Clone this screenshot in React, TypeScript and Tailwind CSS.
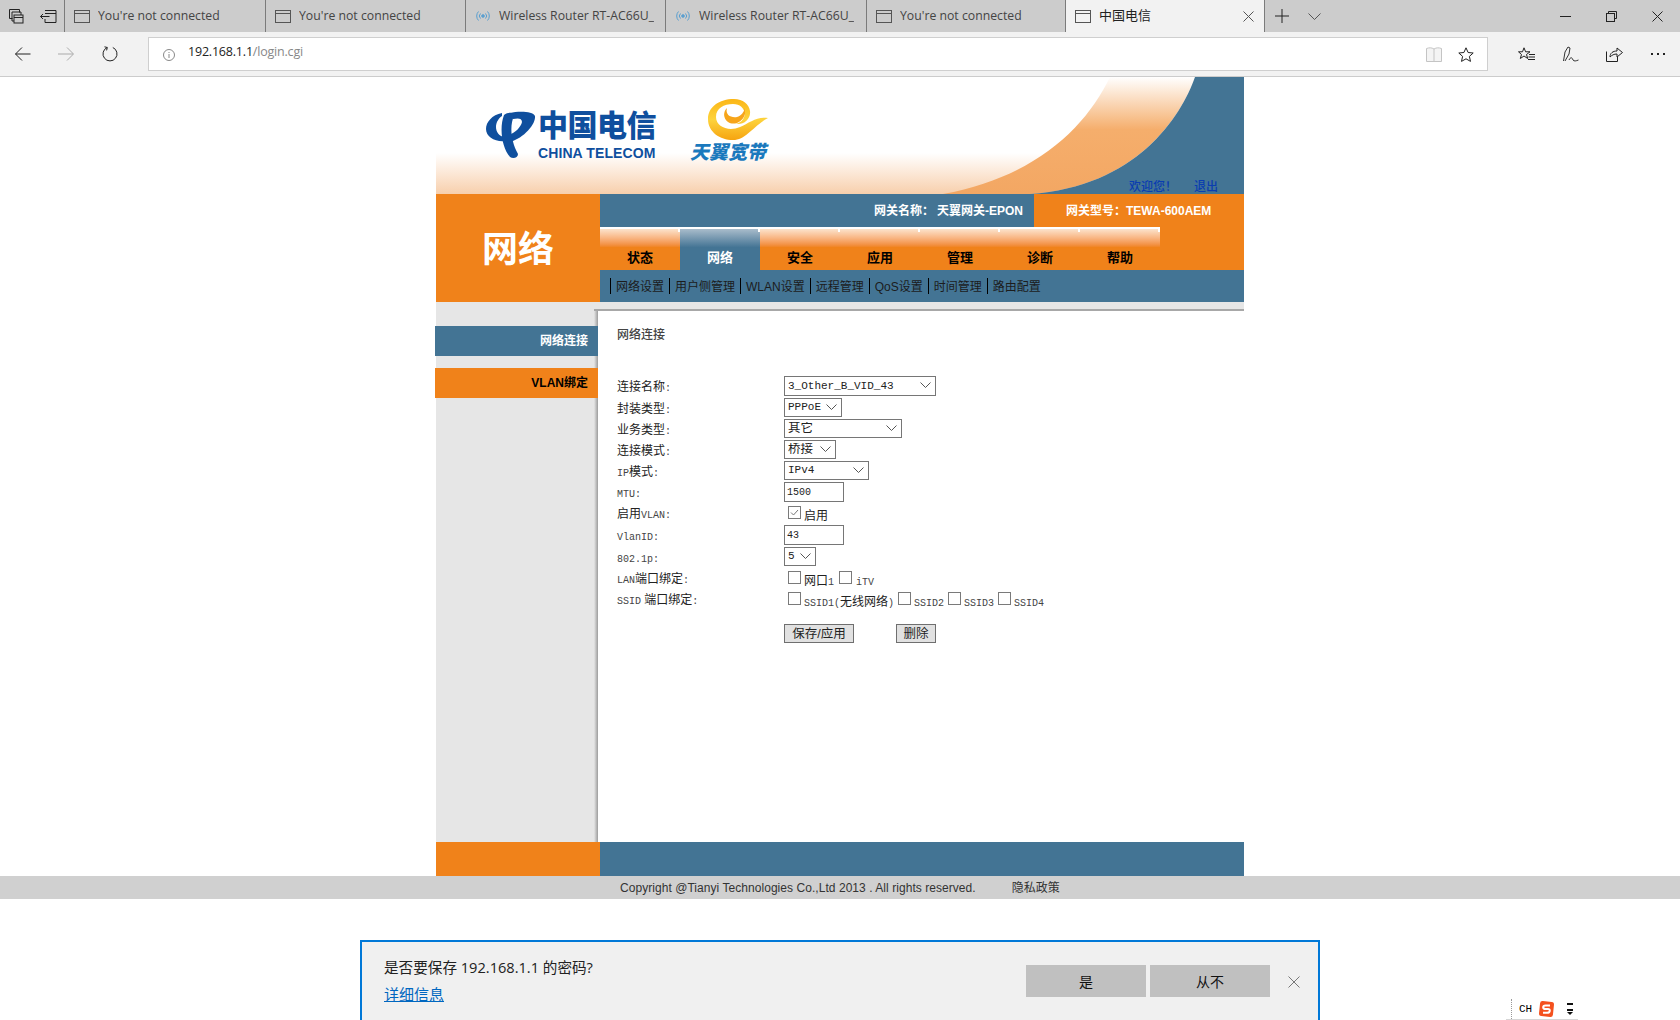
const mono = "font-['Liberation_Mono','Noto_Sans_CJK_SC',monospace]";

const tabs = [
    { title: "You're not connected", width: "w-[201px]", icon: "page" },
    { title: "You're not connected", width: "w-[200px]", icon: "page" },
    { title: "Wireless Router RT-AC66U_", width: "w-[200px]", icon: "wifi" },
    { title: "Wireless Router RT-AC66U_", width: "w-[201px]", icon: "wifi" },
    { title: "You're not connected", width: "w-[199px]", icon: "page" },
];

const PageIcon = () => (
    <svg width="16" height="13" viewBox="0 0 16 13" fill="none" stroke="#555" className="shrink-0">
        <rect x="0.5" y="0.5" width="15" height="12" />
        <path d="M0 3.5h16" />
    </svg>
);

const WifiIcon = () => (
    <svg width="16" height="14" viewBox="0 0 16 14" fill="none" stroke="#5a9fd0" className="shrink-0">
        <circle cx="8" cy="7" r="1.3" fill="#5a9fd0" />
        <path d="M5.5 4.5a3.5 3.5 0 0 0 0 5M10.5 4.5a3.5 3.5 0 0 1 0 5M3.5 2.5a6.5 6.5 0 0 0 0 9M12.5 2.5a6.5 6.5 0 0 1 0 9" />
    </svg>
);

const BrowserTabs = () => (
    <div className="flex h-8 bg-[#cccccc] text-[12.25px] text-[#444] font-['Open_Sans','Noto_Sans_CJK_SC',sans-serif]">
        <div className="flex w-16 items-center pl-[9px]">
            <svg width="15" height="15" viewBox="0 0 15 15" fill="none" stroke="#222">
                <path d="M0.5 0.5h10v3M0.5 0.5v9h3M3 3h9v3M3 3v9h2" />
                <rect x="5" y="6" width="9" height="8" fill="#cccccc" />
                <path d="M5 8.5h9" />
            </svg>
            <svg width="17" height="13" viewBox="0 0 17 13" fill="none" stroke="#222" className="ml-4">
                <path d="M5 0.5h11v12H5V9M5 3.5h11M0.5 6.5h9M3 4L0.5 6.5 3 9" />
            </svg>
        </div>
        {tabs.map((tab, index) => (
            <div key={index} className={`flex items-center border-l border-[#7b7b7b] pl-[9px] ${tab.width}`}>
                <span className="flex w-6 shrink-0">{tab.icon === "wifi" ? <WifiIcon /> : <PageIcon />}</span>
                <span className="truncate">{tab.title}</span>
            </div>
        ))}
        <div className="flex w-[200px] items-center border-x border-[#7b7b7b] bg-[#f2f2f2] pl-[9px] text-[13px] text-[#222]">
            <span className="flex w-6 shrink-0"><PageIcon /></span>
            <span>中国电信</span>
            <svg width="11" height="11" viewBox="0 0 11 11" stroke="#555" className="ml-auto mr-[10px]">
                <path d="M0.5 0.5l10 10M10.5 0.5l-10 10" />
            </svg>
        </div>
        <div className="flex flex-1 items-center">
            <svg width="14" height="14" viewBox="0 0 14 14" stroke="#222" className="ml-[10px]">
                <path d="M7 0v14M0 7h14" />
            </svg>
            <svg width="13" height="7" viewBox="0 0 13 7" fill="none" stroke="#555" className="ml-[19px]">
                <path d="M0.5 0.5L6.5 6.5 12.5 0.5" />
            </svg>
            <div className="ml-auto flex items-center">
                <svg width="11" height="11" viewBox="0 0 11 11" stroke="#222"><path d="M0 5.5h11" /></svg>
                <svg width="11" height="11" viewBox="0 0 11 11" fill="none" stroke="#222" className="ml-[35px]">
                    <path d="M2.5 2.5v-2h8v7h-2" />
                    <rect x="0.5" y="2.5" width="8" height="8" />
                </svg>
                <svg width="11" height="11" viewBox="0 0 11 11" stroke="#222" className="ml-[35px] mr-[17px]">
                    <path d="M0.5 0.5l10 10M10.5 0.5l-10 10" />
                </svg>
            </div>
        </div>
    </div>
);

const Toolbar = () => (
    <div className="flex h-[45px] items-center border-b border-[#cccccc] bg-[#f2f2f2]">
        <div className="flex w-[148px] items-center pl-[15px]">
            <svg width="16" height="14" viewBox="0 0 16 14" fill="none" stroke="#222">
                <path d="M0.5 7h15M7 0.5L0.5 7 7 13.5" />
            </svg>
            <svg width="16" height="14" viewBox="0 0 16 14" fill="none" stroke="#aaa" className="ml-[27px]">
                <path d="M0 7h15M9 0.5L15.5 7 9 13.5" />
            </svg>
            <svg width="16" height="16" viewBox="0 0 16 16" fill="none" stroke="#222" className="ml-7">
                <path d="M5.2 1.5a7 7 0 1 0 5.6 0M2.5 0.8l2.8 0.7-0.7 2.9" />
            </svg>
        </div>
        <div className="flex h-[34px] w-[1340px] items-center border-[1.5px] border-[#cfcfcf] bg-white pb-[3px]">
            <svg width="12" height="12" viewBox="0 0 12 12" fill="none" stroke="#888" className="ml-[14px] mt-[5px]">
                <circle cx="6" cy="6" r="5.5" />
                <path d="M6 5v4M6 3v1" />
            </svg>
            <span className="ml-[13px] text-[12.5px] tracking-[-0.2px] text-[#222] font-['Open_Sans',sans-serif]">
                192.168.1.1<span className="text-[#888]">/login.cgi</span>
            </span>
            <svg width="16" height="15" viewBox="0 0 16 15" fill="#f4f4f4" stroke="#c4c4c4" className="ml-auto mt-[3px]">
                <path d="M0.5 1.5c3-1 5-1 7.5 0.5 2.5-1.5 4.5-1.5 7.5-0.5v13h-15zM8 2v12.5" />
            </svg>
            <svg width="16" height="15" viewBox="0 0 16 15" fill="none" stroke="#222" className="ml-4 mr-[13px] mt-[3px]">
                <path d="M8 0.8l2.1 4.7 5.1 0.5-3.8 3.4 1.1 5-4.5-2.6-4.5 2.6 1.1-5L0.8 6l5.1-0.5z" />
            </svg>
        </div>
        <div className="flex flex-1 items-center pl-[30px]">
            <svg width="17" height="15" viewBox="0 0 17 15" fill="none" stroke="#222">
                <path d="M6 0.8l1.6 4h4.4l-3.5 2.7 1.2 4-3.7-2.5-3.7 2.5 1.2-4L0.5 4.8h4zM11 7.5h6M10.5 10h6.5M10 12.5h7" />
            </svg>
            <svg width="16" height="16" viewBox="0 0 16 16" fill="none" stroke="#333" className="ml-7">
                <path d="M0.5 15L2 6l3-5 2 1-1 6-4 7M6 14c1.5-3 3-3 4 0 1 1.5 3 1 5.5 0" />
            </svg>
            <svg width="17" height="15" viewBox="0 0 17 15" fill="none" stroke="#222" className="ml-[27px]">
                <path d="M0.5 4.5v10h11V10M4 10c0-4 3-6 7-6V1l5.5 4.5L11 10V7c-3 0-5 1-7 3z" />
            </svg>
            <span className="ml-[28px] flex gap-1">
                <i className="h-[2px] w-[2px] bg-[#222]" />
                <i className="h-[2px] w-[2px] bg-[#222]" />
                <i className="h-[2px] w-[2px] bg-[#222]" />
            </span>
        </div>
    </div>
);

const HeaderArt = () => (
    <svg viewBox="0 0 808 117" className="absolute inset-0 h-full w-full">
        <defs>
            <linearGradient id="swoosh" x1="0" y1="0" x2="0" y2="1">
                <stop offset="0" stopColor="#ffffff" />
                <stop offset="0.45" stopColor="#f5ae6c" />
                <stop offset="1" stopColor="#f3a763" />
            </linearGradient>
            <linearGradient id="swirl" x1="0" y1="0" x2="0" y2="1">
                <stop offset="0" stopColor="#fbb616" />
                <stop offset="0.5" stopColor="#fdd33c" />
                <stop offset="1" stopColor="#f6a410" />
            </linearGradient>
        </defs>
        <path d="M674 0C650 50 600 100 507 117L594 117C700 110 745 40 759 0Z" fill="url(#swoosh)" />
        <path d="M759 0C745 40 700 110 594 117L808 117L808 0Z" fill="#437494" />
        <g fill="#0f4f9e" transform="translate(50 35)">
            <path d="M16 1C6 3 0 10 0 17C0 25 9 30 19 29L18 25C13 24 10 20 10 15C10 10 13 6 16 4Z" />
            <path d="M24 1C32-1 47-1 49 4C50 12 38 26 24 30L23 23C29 21 35 15 36 10C36 6 32 6 27 7Z" />
            <path d="M18 3C22 0 28 0 28 4C24 12 24 28 32 42C32 46 27 47 24 45C16 36 13 16 18 3Z" />
        </g>
        <g transform="translate(272 22)">
            <path d="M26 0C11 0 0 8 0 20C0 33 12 41 25 41C38 41 45 27 60 19C49 17 41 24 32 28C21 33 8 28 8 18C8 9 16 5 25 5C32 5 36 9 37 15C36 21 32 24 28 25C36 26 43 20 42 12C41 5 35 0 26 0Z" fill="url(#swirl)" />
            <path d="M37 15C35 23 26 27 20 23C15 19 15 13 19 9C17 16 23 19 29 18C33 17 36 13 37 9Z" fill="#f7a51a" />
        </g>
    </svg>
);

const Header = () => (
    <div className="relative h-[117px] bg-gradient-to-b from-white from-[65%] to-[#f7cfac]">
        <HeaderArt />
        <div className="absolute left-[102px] top-[31px] w-[120px] text-[30px] font-black leading-[36px] tracking-[-0.5px] text-[#0f4f9e] whitespace-nowrap">
            中国电信
        </div>
        <div className="absolute left-[102px] top-[68px] text-[14px] font-bold leading-[16px] tracking-[0.1px] text-[#0f4f9e] font-['Liberation_Sans',sans-serif] whitespace-nowrap">
            CHINA TELECOM
        </div>
        <div className="absolute left-[254px] top-[65px] text-[19px] font-black italic leading-[22px] text-[#1b79bd] whitespace-nowrap">
            天翼宽带
        </div>
        <div className="absolute left-[693px] top-[102px] flex gap-[17px] text-[12px] font-medium leading-[16px] text-[#0a3db0]">
            <span>欢迎您！</span>
            <span>退出</span>
        </div>
    </div>
);

const navItems = ["状态", "网络", "安全", "应用", "管理", "诊断", "帮助"];
const subItems = ["网络设置", "用户侧管理", "WLAN设置", "远程管理", "QoS设置", "时间管理", "路由配置"];

const Nav = () => (
    <div className="flex h-[108px]">
        <div className="flex w-[164px] items-center justify-center bg-[#f0821a] pt-1 text-[36px] font-bold text-white">
            网络
        </div>
        <div className="flex flex-1 flex-col">
            <div className="flex h-[33px] text-[12px] font-bold text-white">
                <div className="flex flex-1 items-center justify-end bg-[#437494] pr-[11px]">
                    <span>网关名称：</span>
                    <span className="ml-[3px]">天翼网关-EPON</span>
                </div>
                <div className="flex w-[210px] items-center bg-[#f0821a] pl-[32px]">网关型号：TEWA-600AEM</div>
            </div>
            <div className="flex h-[43px] bg-[#f0821a]">
                {navItems.map((item) => (
                    <div
                        key={item}
                        className={
                            item === "网络"
                                ? "relative flex w-20 items-end justify-center border-t-2 border-white bg-gradient-to-b from-[#a9bccb] to-[#437494] to-45% pb-[3px] text-[13px] font-bold text-white"
                                : "relative flex w-20 items-end justify-center border-t-2 border-white bg-gradient-to-b from-[#fbe3cc] to-[#f0821a] to-45% pb-[3px] text-[13px] font-bold text-black"
                        }
                    >
                        <span className="absolute right-0 top-0 h-[3px] w-[2px] bg-white" />
                        {item}
                    </div>
                ))}
            </div>
            <div className="flex h-8 items-center bg-[#437494] pl-[10px] text-[12px] text-[#1c1c1c]">
                {subItems.map((item) => (
                    <span key={item} className="flex h-4 items-center border-l border-black pl-[5px] pr-[5px] pt-[2px]">
                        {item}
                    </span>
                ))}
            </div>
        </div>
    </div>
);

const Lat = ({ children }: { children: React.ReactNode }) => (
    <span className={`text-[10px] text-[#444] ${mono}`}>{children}</span>
);

const Chevron = () => (
    <svg width="11" height="6" viewBox="0 0 11 6" fill="none" stroke="#555" className="pointer-events-none absolute right-[5px] top-[6px]">
        <path d="M0.5 0.5l5 5 5-5" />
    </svg>
);

const Select = ({ value, width, cjk, tall }: { value: string; width: string; cjk?: boolean; tall?: boolean }) => (
    <span className={`relative block ${tall ? "h-5" : "h-[19px]"} ${width}`}>
        <select
            defaultValue={value}
            className={
                cjk
                    ? "block h-full w-full appearance-none rounded-none border border-[#767676] bg-white pl-[3px] text-[12.5px] leading-none text-[#222]"
                    : `block h-full w-full appearance-none rounded-none border border-[#767676] bg-white pl-[3px] text-[11px] leading-none text-[#222] ${mono}`
            }
        >
            <option>{value}</option>
        </select>
        <Chevron />
    </span>
);

const Input = ({ value }: { value: string }) => (
    <input
        defaultValue={value}
        className={`block h-5 w-[60px] border border-[#767676] bg-white pl-[2px] text-[10px] text-[#222] ${mono}`}
    />
);

const Check = ({ checked, className }: { checked?: boolean; className?: string }) => (
    <span className={`relative mt-[3px] inline-block h-[13px] w-[13px] shrink-0 border border-[#7a7a7a] bg-white ${className ?? ""}`}>
        {checked && (
            <svg width="11" height="11" viewBox="0 0 11 11" fill="none" stroke="#777" className="absolute left-0 top-0">
                <path d="M2 5.5l2.5 2.5L9 3" />
            </svg>
        )}
    </span>
);

const rows: { h: string; label: React.ReactNode; control: React.ReactNode }[] = [
    { h: "h-[22px]", label: <>连接名称<Lat>:</Lat></>, control: <Select value="3_Other_B_VID_43" width="w-[152px]" tall /> },
    { h: "h-[21px]", label: <>封装类型<Lat>:</Lat></>, control: <Select value="PPPoE" width="w-[58px]" /> },
    { h: "h-[21px]", label: <>业务类型<Lat>:</Lat></>, control: <Select value="其它" width="w-[118px]" cjk /> },
    { h: "h-[21px]", label: <>连接模式<Lat>:</Lat></>, control: <Select value="桥接" width="w-[52px]" cjk /> },
    { h: "h-[21px]", label: <><Lat>IP</Lat>模式<Lat>:</Lat></>, control: <Select value="IPv4" width="w-[85px]" /> },
    { h: "h-[21px]", label: <Lat>MTU:</Lat>, control: <Input value="1500" /> },
    {
        h: "h-[22px]",
        label: <>启用<Lat>VLAN:</Lat></>,
        control: (
            <span className="flex pl-1">
                <Check checked />
                <span className="ml-[3px] mt-[5px] leading-[16px]">启用</span>
            </span>
        ),
    },
    { h: "h-[22px]", label: <Lat>VlanID:</Lat>, control: <Input value="43" /> },
    { h: "h-[21px]", label: <Lat>802.1p:</Lat>, control: <Select value="5" width="w-[32px]" /> },
    {
        h: "h-[21px]",
        label: <><Lat>LAN</Lat>端口绑定<Lat>:</Lat></>,
        control: (
            <span className="flex pl-1">
                <Check />
                <span className="ml-[3px] mt-[5px] leading-[16px]">网口<Lat>1</Lat></span>
                <Check className="ml-[5px]" />
                <span className="ml-[4px] mt-[5px] leading-[16px]"><Lat>iTV</Lat></span>
            </span>
        ),
    },
    {
        h: "h-[21px]",
        label: <><Lat>SSID</Lat> 端口绑定<Lat>:</Lat></>,
        control: (
            <span className="flex pl-1">
                <Check />
                <span className="ml-[3px] w-[94px] mt-[5px] leading-[16px]"><Lat>SSID1(</Lat>无线网络<Lat>)</Lat></span>
                <Check />
                <span className="ml-[3px] w-[34px] mt-[5px] leading-[16px]"><Lat>SSID2</Lat></span>
                <Check />
                <span className="ml-[3px] w-[34px] mt-[5px] leading-[16px]"><Lat>SSID3</Lat></span>
                <Check />
                <span className="ml-[3px] mt-[5px] leading-[16px]"><Lat>SSID4</Lat></span>
            </span>
        ),
    },
];

const Main = () => (
    <div className="flex h-[540px] bg-[#e6e6e6]">
        <div className="w-[158px] pt-6 text-[12px] font-bold">
            <div className="relative z-10 -ml-px flex h-[30px] w-[163px] items-center justify-end bg-[#437494] pr-[10px] text-white">
                网络连接
            </div>
            <div className="relative z-10 -ml-px mt-3 flex h-[30px] w-[163px] items-center justify-end bg-[#f0821a] pr-[10px] text-black">
                VLAN绑定
            </div>
        </div>
        <div className="mt-[7px] flex flex-1 border-t-2 border-[#a8a8a8]">
            <div className="w-1 bg-gradient-to-r from-[#e6e6e6] to-[#9c9c9c]" />
            <div className="flex-1 bg-white pl-[19px] pt-4 text-[12px] text-[#222]">
                <div className="leading-4 font-medium text-[#444]">网络连接</div>
                <div className="mt-[33px]">
                    {rows.map((row, index) => (
                        <div key={index} className={`grid grid-cols-[167px_1fr] items-start ${row.h}`}>
                            <div className="pt-[3px] leading-4 whitespace-nowrap">{row.label}</div>
                            <div>{row.control}</div>
                        </div>
                    ))}
                </div>
                <div className="ml-[167px] mt-[14px] flex gap-[42px] text-[12.5px]">
                    <button className="h-[19px] w-[70px] border border-[#6f6f6f] bg-[#e1e1e1] pt-[2px] leading-none">保存/应用</button>
                    <button className="h-[19px] w-10 border border-[#6f6f6f] bg-[#e1e1e1] pt-[2px] leading-none">删除</button>
                </div>
            </div>
        </div>
    </div>
);

const SavePrompt = () => (
    <div className="mx-auto mt-[41px] flex h-20 w-[960px] border-2 border-b-0 border-[#0078d7] bg-[#f0f0f0] pl-[22px] font-['Open_Sans','Noto_Sans_CJK_SC',sans-serif]">
        <div className="pt-[14px] text-[15px] text-[#222]">
            <div className="leading-[22px] text-[14.6px]">是否要保存 192.168.1.1 的密码?</div>
            <div className="mt-[5px] leading-[22px] text-[#0067c0] underline">详细信息</div>
        </div>
        <div className="ml-auto flex items-start pt-[23px]">
            <button className="h-8 w-[120px] bg-[#c0c0c0] text-[14px] text-[#111]">是</button>
            <button className="ml-1 h-8 w-[120px] bg-[#c0c0c0] text-[14px] text-[#111]">从不</button>
            <svg width="12" height="12" viewBox="0 0 12 12" stroke="#777" className="ml-[18px] mr-[18px] mt-[11px]">
                <path d="M0.5 0.5l11 11M11.5 0.5l-11 11" />
            </svg>
        </div>
    </div>
);

const ImeBar = () => (
    <div className="absolute left-[1506px] top-[999px] flex h-[21px] w-[72px] items-center border-b border-[#d6d6d6] pl-[13px]">
        <span className="absolute left-[5px] top-0 h-full border-l border-dotted border-[#999]" />
        <span className={`text-[11px] text-black ${mono}`}>CH</span>
        <svg width="17" height="18" viewBox="0 0 17 18" className="ml-[6px]">
            <rect x="1.5" y="1.5" width="14" height="15" rx="2.5" fill="#f4511e" transform="rotate(6 8.5 9)" />
            <path d="M12 5.5H7.5Q5 5.5 5.2 7.5 5.4 9 7.5 9H10Q12 9 11.8 10.8 11.5 12.8 9 12.8H5" fill="none" stroke="#fff" strokeWidth="2" />
        </svg>
        <svg width="6" height="12" viewBox="0 0 6 12" className="ml-3">
            <rect x="0" y="0" width="6" height="2" fill="#111" />
            <rect x="0" y="6" width="6" height="2" fill="#111" />
            <path d="M0 9h6l-3 3z" fill="#111" />
        </svg>
    </div>
);

const App = () => (
    <div className="relative h-[1020px] overflow-hidden bg-white font-['Liberation_Sans','Noto_Sans_CJK_SC',sans-serif]">
        <BrowserTabs />
        <Toolbar />
        <div className="mx-auto w-[808px]">
            <Header />
            <Nav />
            <Main />
            <div className="flex h-[34px]">
                <div className="w-[164px] bg-[#f0821a]" />
                <div className="flex-1 bg-[#437494]" />
            </div>
        </div>
        <div className="flex h-[23px] items-center bg-[#d0d0d0] pl-[620px] text-[12px] tracking-[0.05px] text-[#333]">
            <span>Copyright @Tianyi Technologies Co.,Ltd 2013 . All rights reserved.</span>
            <span className="ml-[36px]">隐私政策</span>
        </div>
        <SavePrompt />
        <ImeBar />
    </div>
);

export default App;
